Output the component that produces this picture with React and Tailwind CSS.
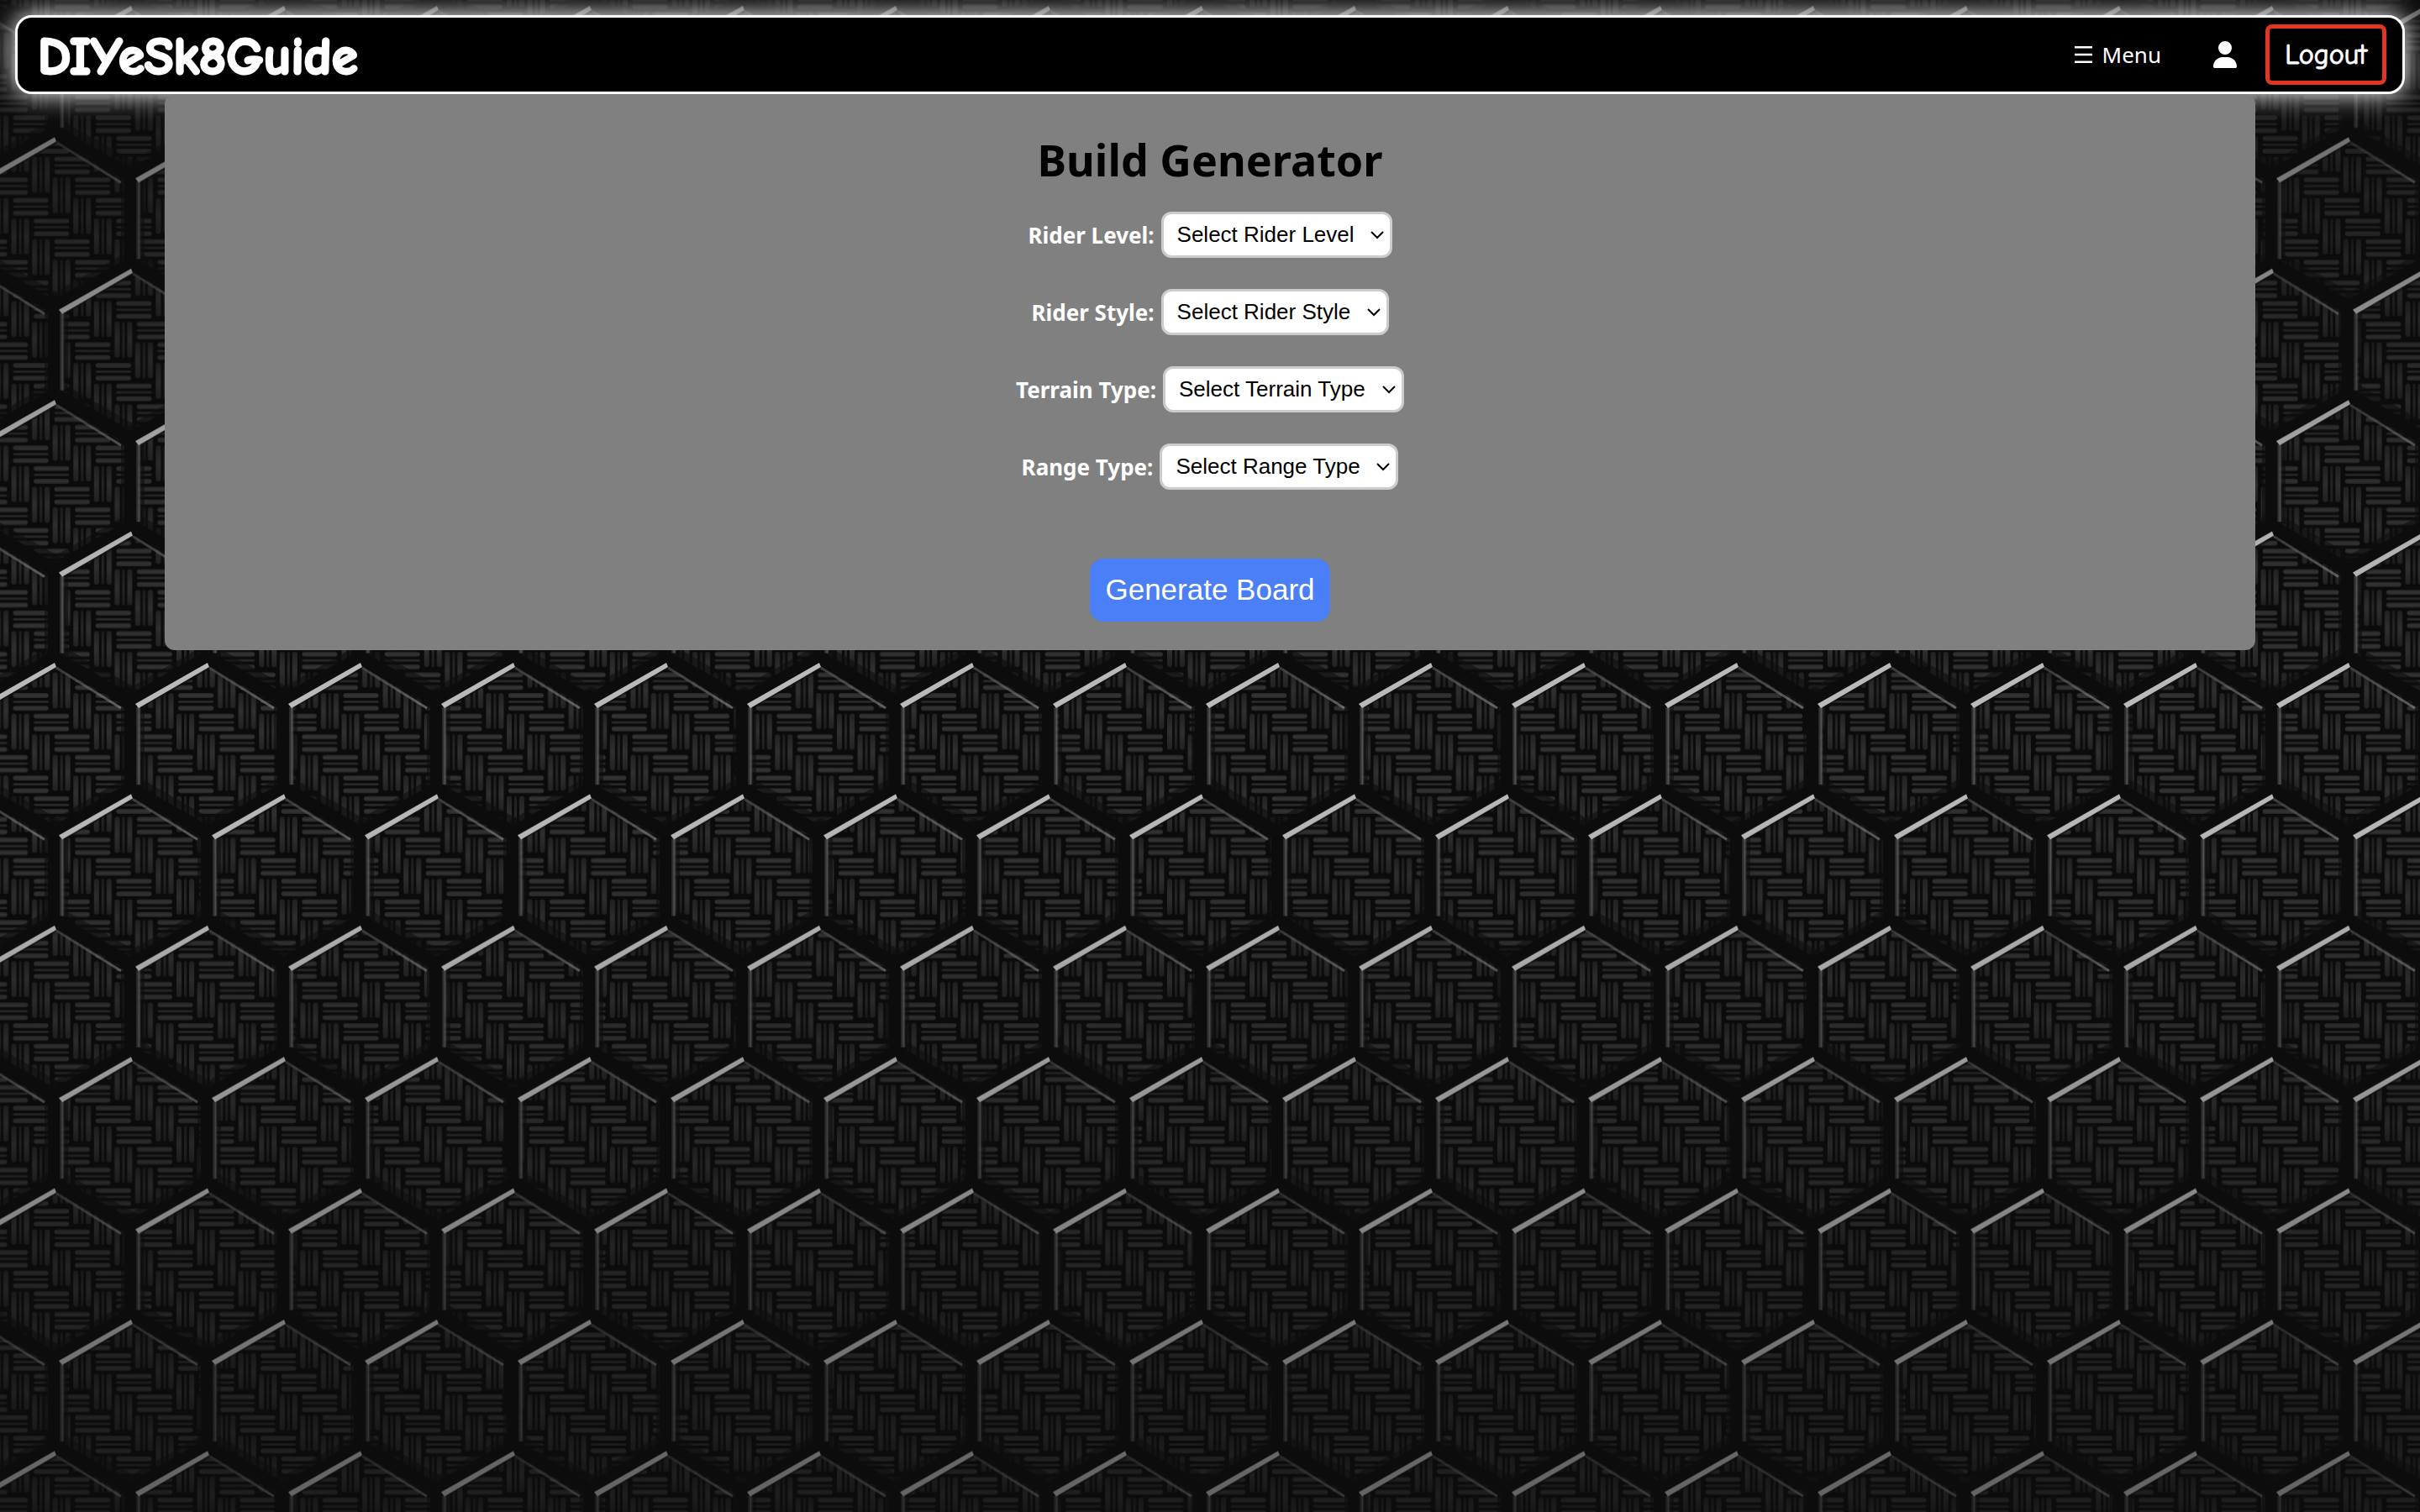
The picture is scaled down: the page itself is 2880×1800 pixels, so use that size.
import React from "react";
import { FaUser } from "react-icons/fa6";

const U = 24.56;
const P = U * 4;

/* One ribbon of three strands, two cells long. */
function HBlock({ c, r }) {
  const x = c * U + 3;
  const y = r * U + 2;
  return (
    <g fill="url(#strandH)">
      <rect x={x} y={y} width="42" height="6" rx="3" />
      <rect x={x} y={y + 9} width="42" height="3" rx="1.5" opacity="0.8" />
      <rect x={x} y={y + 15} width="42" height="6" rx="3" />
    </g>
  );
}

function VBlock({ c, r }) {
  const x = c * U + 1;
  const y = r * U + 2;
  return (
    <g fill="url(#strandV)">
      <rect x={x} y={y} width="6" height="43" rx="3" />
      <rect x={x + 9} y={y} width="3" height="43" rx="1.5" opacity="0.8" />
      <rect x={x + 15} y={y} width="6" height="43" rx="3" />
    </g>
  );
}

/* Lit rim of one hexagon; (x, y) is its top corner. */
function Rim({ x, y }) {
  return (
    <g transform={`translate(${x} ${y})`}>
      <path d="M2 3 L79 51" stroke="url(#rimRight)" strokeWidth="3" fill="none" />
      <rect x="-85" y="50" width="6" height="92" fill="url(#rimLeft)" />
      <path d="M-86 46 L0 -3 L2 2 L-82 51 Z" fill="#bdbdbd" />
    </g>
  );
}

const ROW = 156.4;
const COL = 182;
const net = (x, y) =>
  `M${x - 91} ${y + 43} L${x} ${y - 9} L${x + 91} ${y + 43} M${x - 91} ${y + 43} V${y + ROW - 9}`;

function CarbonBackdrop() {
  const tops = [];
  for (const row of [-1, 0, 1, 2]) {
    for (const col of [-1, 0, 1, 2]) {
      tops.push([col * COL + (row % 2 ? 91 : 0), row * ROW]);
    }
  }
  return (
    <svg className="absolute inset-0 -z-10 h-full w-full" aria-hidden="true">
      <defs>
        <linearGradient id="strandH" x1="0" x2="0" y1="0" y2="1">
          <stop offset="0" stopColor="#252525" />
          <stop offset="0.5" stopColor="#353535" />
          <stop offset="1" stopColor="#282828" />
        </linearGradient>
        <linearGradient id="strandV" x1="0" x2="0" y1="0" y2="1">
          <stop offset="0" stopColor="#222" />
          <stop offset="0.5" stopColor="#303030" />
          <stop offset="1" stopColor="#222" />
        </linearGradient>
        <linearGradient id="rimRight">
          <stop offset="0" stopColor="#8a8a8a" stopOpacity="0.35" />
          <stop offset="1" stopColor="#8a8a8a" stopOpacity="0.65" />
        </linearGradient>
        <linearGradient id="rimLeft">
          <stop offset="0" stopColor="#444" stopOpacity="0.4" />
          <stop offset="0.6" stopColor="#777" stopOpacity="0.65" />
          <stop offset="1" stopColor="#444" stopOpacity="0.1" />
        </linearGradient>
        <linearGradient id="dim" x1="0" x2="0" y1="0" y2="1">
          <stop offset="0" stopColor="#0d0d0d" stopOpacity="0.5" />
          <stop offset="0.1" stopColor="#0d0d0d" stopOpacity="0.42" />
          <stop offset="0.36" stopColor="#0d0d0d" stopOpacity="0.06" />
          <stop offset="0.5" stopColor="#0d0d0d" stopOpacity="0" />
          <stop offset="0.62" stopColor="#0d0d0d" stopOpacity="0.1" />
          <stop offset="0.88" stopColor="#0d0d0d" stopOpacity="0.4" />
          <stop offset="1" stopColor="#0d0d0d" stopOpacity="0.52" />
        </linearGradient>
        <pattern id="weave" x="12.6" y="823" width={P} height={P} patternUnits="userSpaceOnUse">
          {[-1, 0, 1, 2, 3].map((r) => (
            <g key={r}>
              <HBlock c={r} r={r} />
              <HBlock c={r - 4} r={r} />
              <VBlock c={r + 3} r={r} />
              <VBlock c={r - 1} r={r} />
            </g>
          ))}
        </pattern>
        <pattern id="hexes" x="65" y="792" width={COL} height={ROW * 2} patternUnits="userSpaceOnUse">
          {tops.map(([x, y]) => (
            <path
              key={`${x},${y}`}
              d={net(x, y)}
              fill="none"
              transform="translate(2 -2)"
              stroke="#0d0d0d"
              strokeOpacity="0.6"
              strokeWidth="28"
            />
          ))}
          {tops.map(([x, y]) => (
            <path key={`${x},${y}`} d={net(x, y)} fill="none" stroke="#0c0c0c" strokeWidth="16" strokeLinejoin="round" />
          ))}
          {tops.map(([x, y]) => (
            <Rim key={`${x},${y}`} x={x} y={y} />
          ))}
        </pattern>
      </defs>
      <rect width="100%" height="100%" fill="#0b0b0b" />
      <rect width="100%" height="100%" fill="url(#weave)" />
      <rect width="100%" height="100%" fill="url(#hexes)" />
      <rect width="100%" height="100%" fill="url(#dim)" />
    </svg>
  );
}

const fields = [
  { id: "rider-level", label: "Rider Level:", placeholder: "Select Rider Level" },
  { id: "rider-style", label: "Rider Style:", placeholder: "Select Rider Style" },
  { id: "terrain-type", label: "Terrain Type:", placeholder: "Select Terrain Type" },
  { id: "range-type", label: "Range Type:", placeholder: "Select Range Type" },
];

function Field({ id, label, placeholder }) {
  return (
    <div className="flex items-center justify-center gap-2">
      <label htmlFor={id} className="text-[26px] leading-9 font-bold text-white">
        {label}
      </label>
      <div className="relative">
        <select
          id={id}
          className="block h-[55px] appearance-none rounded-xl border-3 border-[#ccc] bg-white pr-[42px] pl-4 font-['Liberation_Sans',Arial,sans-serif] text-[26px] text-black"
        >
          <option>{placeholder}</option>
        </select>
        <svg
          className="pointer-events-none absolute top-5 right-2.5 h-4 w-4"
          viewBox="0 0 16 16"
          fill="none"
          stroke="#000"
          strokeWidth="2"
          aria-hidden="true"
        >
          <path d="M1 4 L8 11 L15 4" />
        </svg>
      </div>
    </div>
  );
}

export default function App() {
  return (
    <div className="relative isolate min-h-screen overflow-hidden px-[18px] pt-[18px] font-['Segoe_UI','Noto_Sans',sans-serif]">
      <CarbonBackdrop />
      <nav className="flex h-[94px] items-center justify-between rounded-[20px] border-3 border-white bg-black pr-[19px] pl-6 text-white shadow-[0_0_30px_#fff]">
        <a
          href="#"
          className="pt-1 font-['Comic_Sans_MS','Comic_Neue',cursive] text-[63px] leading-none font-bold [-webkit-text-stroke:3px_#fff]"
        >
          DIYeSk8Guide
        </a>
        <div className="flex items-center">
          <button type="button" className="flex items-center gap-3 text-[26px] leading-9">
            <svg className="h-5 w-[21px]" viewBox="0 0 21 20" fill="#fff" aria-hidden="true">
              <path d="M0 0h21v2.5H0zM0 8.75h21v2.5H0zM0 17.5h21v2.5H0z" />
            </svg>
            Menu
          </button>
          <a href="#" aria-label="Profile" className="mr-[34px] ml-[62px]">
            <FaUser className="h-8 w-7" />
          </a>
          <button
            type="button"
            className="h-[72px] w-36 rounded-lg border-5 border-[#e23522] font-['Comic_Sans_MS','Comic_Neue',cursive] text-[34px] leading-none [-webkit-text-stroke:1px_#fff]"
          >
            Logout
          </button>
        </div>
      </nav>
      <main className="relative mx-auto flex w-full max-w-[2488px] flex-col items-center rounded-xl bg-[#808080] pt-10 pb-[34px]">
        <h1 className="text-[52px] leading-[76px] font-bold text-black">Build Generator</h1>
        <form className="mt-6 flex flex-col items-center" onSubmit={(e) => e.preventDefault()}>
          <div className="flex flex-col gap-[37px]">
            {fields.map((f) => (
              <Field key={f.id} {...f} />
            ))}
          </div>
          <button
            type="submit"
            className="mt-[82px] h-[75px] rounded-2xl bg-[#4a7ff7] px-[18px] font-['Liberation_Sans',Arial,sans-serif] text-[35px] text-white"
          >
            Generate Board
          </button>
        </form>
      </main>
    </div>
  );
}
